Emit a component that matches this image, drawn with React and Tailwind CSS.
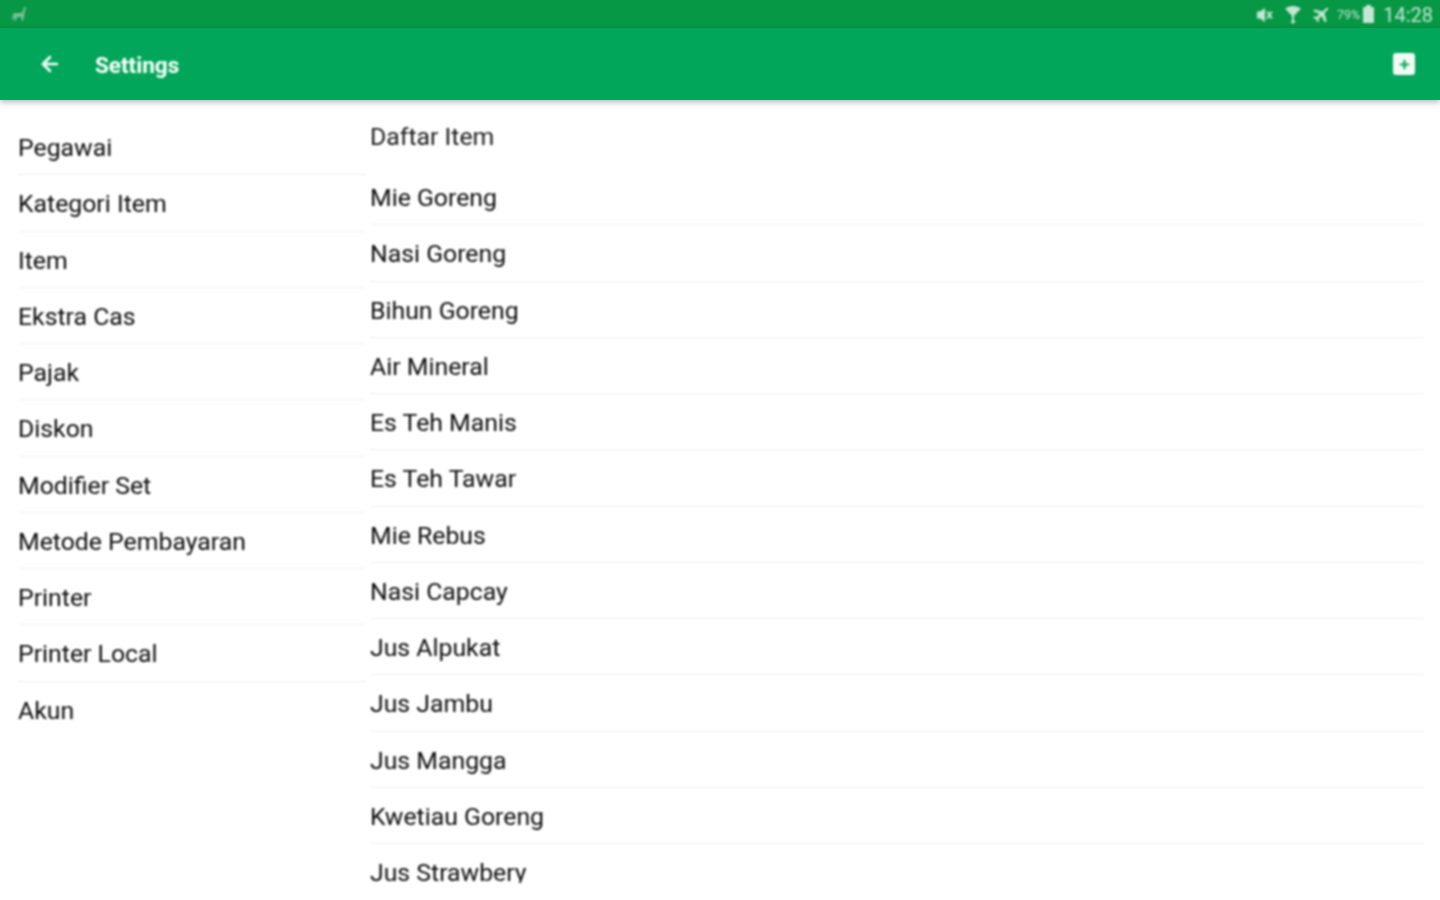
import { ArrowLeft, Plus } from 'lucide-react'

const settings = ['Pegawai', 'Kategori Item', 'Item', 'Ekstra Cas', 'Pajak', 'Diskon', 'Modifier Set', 'Metode Pembayaran', 'Printer', 'Printer Local', 'Akun']
const items = ['Mie Goreng', 'Nasi Goreng', 'Bihun Goreng', 'Air Mineral', 'Es Teh Manis', 'Es Teh Tawar', 'Mie Rebus', 'Nasi Capcay', 'Jus Alpukat', 'Jus Jambu', 'Jus Mangga', 'Kwetiau Goreng', 'Jus Strawbery']

function Row({ label, last }) {
  return (
    <div className={`flex h-[56.25px] shrink-0 items-center pt-[2px] text-[24.8px] text-[#0c0c0c] ${last ? '' : 'border-b border-[#efefef]'}`}>
      {label}
    </div>
  )
}

export default function App() {
  return (
    <div className="flex h-[900px] w-[1440px] flex-col overflow-hidden bg-white font-['Roboto',sans-serif]">
      {/* status bar */}
      <div className="flex h-[28px] shrink-0 items-center justify-between bg-[#069845] pl-[11px] pr-[7px] text-[#c4e6d2]">
        <svg width="16" height="17" viewBox="0 0 16 17" fill="#78bf95" className="blur-[0.8px]">
          <path d="M14 1l1 1-1 3-1 6-1 4h-1l-1-4-4 0-1 4H4l-1-4-1 3H1l1-6 2-1h6l2-2 1-4z" />
        </svg>
        <div className="flex items-center pt-[2px] blur-[0.8px]">
          <svg width="16" height="16" viewBox="0 0 16 16" fill="currentColor">
            <path d="M0 4.500h3L8 1v14l-5-3.500H0z" />
            <path d="M10 4.500l5 7M15 4.500l-5 7" stroke="currentColor" strokeWidth="2" />
          </svg>
          <svg width="18" height="20" viewBox="0 0 18 20" fill="currentColor" className="ml-[11px]">
            <path d="M1 3.500C6 0 12 0 17 3.500L9 12z" />
            <path d="M8 11h2v5h2l-3 3-3-3h2z" />
          </svg>
          <svg width="18" height="18" viewBox="0 0 18 18" fill="currentColor" className="ml-[10px]">
            <path d="M15 1.500l1.500 1.500-4 4 2 8-1.500 1.500-3.500-6.500-3 3 .5 2.500-1 1-2-3-3-2 1-1 2.500.5 3-3L1 5l1.500-1.500 8 2z" />
          </svg>
          <span className="ml-[7px] text-[12.5px]">79%</span>
          <div className="relative ml-[3px] h-[16px] w-[11px] rounded-[1px] bg-[#c4e6d2]">
            <div className="absolute -top-[2px] left-[3px] h-[2px] w-[5px] bg-[#c4e6d2]" />
          </div>
          <span className="ml-[9px] text-[20px]">14:28</span>
        </div>
      </div>

      {/* toolbar */}
      <div className="z-10 flex h-[72px] shrink-0 items-center justify-between bg-[#02a65a] pl-[38px] pr-[25px] shadow-[0_2px_6px_rgba(0,0,0,0.3)]">
        <div className="flex items-center text-white blur-[0.8px]">
          <ArrowLeft size={24} strokeWidth={2.5} />
          <span className="ml-[33px] pt-[3px] text-[22.5px] font-bold">Settings</span>
        </div>
        <div className="flex h-[22px] w-[22px] items-center justify-center rounded-[3px] bg-[#f2faf6] blur-[0.8px]">
          <Plus size={13} strokeWidth={4} className="text-[#02a65a]" />
        </div>
      </div>

      {/* body */}
      <div className="flex min-h-0 flex-1 blur-[0.8px]">
        <div className="flex w-[366px] shrink-0 flex-col pl-[18px] pt-[19px]">
          {settings.map((label, i) => (
            <Row key={label} label={label} last={i === settings.length - 1} />
          ))}
        </div>
        <div className="flex h-[783px] min-w-0 flex-1 flex-col overflow-hidden pl-[4px] pr-[16px]">
          <div className="flex h-[69px] shrink-0 items-center pt-[4px] text-[24.8px] text-[#1a1a1a]">Daftar Item</div>
          {items.map((label) => (
            <Row key={label} label={label} />
          ))}
        </div>
      </div>
    </div>
  )
}
